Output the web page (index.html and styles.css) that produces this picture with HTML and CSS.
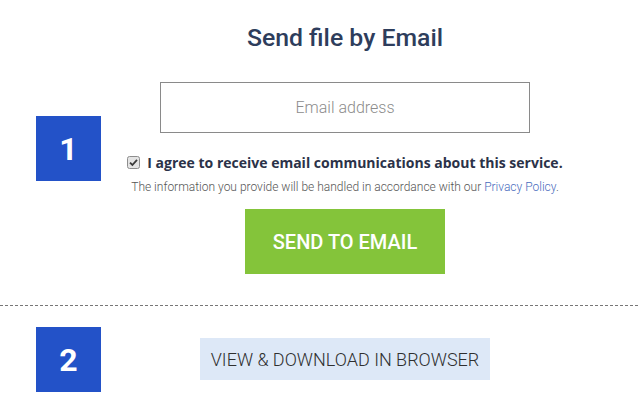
FILE: index.html
```html
<!DOCTYPE html>
<html>
<head>
<meta charset="utf-8">
<link rel="stylesheet" href="styles.css">
</head>
<body>
<section class="step step-one">
  <div class="num">1</div>
  <div class="content">
    <h1 class="title">Send file by Email</h1>
    <input class="email" type="text" placeholder="Email address">
    <label class="agree">
      <svg class="check" width="13" height="13" viewBox="0 0 13 13" aria-hidden="true">
        <rect x="0.5" y="0.5" width="12" height="12" rx="2" fill="#e4e4e4" stroke="#8d8d8d"/>
        <path d="M3 6.6 L5.4 9 L10 3.8" fill="none" stroke="#3a3a3a" stroke-width="1.8"/>
      </svg>
      <span>I agree to receive email communications about this service.</span>
    </label>
    <p class="note">The information you provide will be handled in accordance with our <a href="#">Privacy Policy</a>.</p>
    <button class="send">SEND TO EMAIL</button>
  </div>
</section>
<hr class="divider">
<section class="step step-two">
  <div class="num">2</div>
  <div class="content">
    <button class="view">VIEW &amp; DOWNLOAD IN BROWSER</button>
  </div>
</section>
</body>
</html>
```
FILE: styles.css
```css
* { box-sizing: border-box; }
html, body { margin: 0; padding: 0; background: #fff; }
body { width: 638px; height: 402px; overflow: hidden; font-family: Roboto, "Liberation Sans", sans-serif; }

.step {
  display: grid;
  grid-template-columns: 65px 488px;
  padding-left: 36px;
  align-items: start;
}
.num {
  width: 65px;
  height: 65px;
  background: #2352c8;
  color: #fff;
  font-family: Roboto, sans-serif;
  font-weight: 700;
  font-size: 32px;
  display: flex;
  align-items: center;
  justify-content: center;
}
.content {
  display: flex;
  flex-direction: column;
  align-items: center;
}
.step-one { height: 305px; }
.step-one .num { margin-top: 116px; }
.step-one .content { padding-top: 24px; }
.title {
  margin: 0;
  font-size: 24.8px;
  font-weight: 500;
  color: #2e3d5c;
  line-height: 28px;
}
.email {
  margin-top: 30px;
  width: 370px;
  height: 51px;
  border: 1px solid #8a8a8a;
  font-family: Roboto, sans-serif;
  font-weight: 300;
  font-size: 16px;
  text-align: center;
  color: #333;
  outline: none;
}
.email::placeholder { color: #8c8c8c; }
.agree {
  margin-top: 20px;
  display: flex;
  align-items: center;
  font-family: "Open Sans", sans-serif;
  font-weight: 700;
  font-size: 14px;
  line-height: 19px;
  color: #2b3248;
  white-space: nowrap;
  gap: 7px;
}
.check { display: block; flex: none; }
.note {
  margin: 8px 0 0;
  font-size: 12px;
  line-height: 14px;
  font-weight: 300;
  color: #555;
  white-space: nowrap;
}
.note a { color: #4a6cbd; text-decoration: none; }
.send {
  margin-top: 15px;
  width: 200px;
  height: 65px;
  border: 0;
  background: #84c43a;
  color: #fff;
  font-family: Roboto, sans-serif;
  font-weight: 500;
  font-size: 20px;
}
.divider {
  margin: 0;
  border: 0;
  border-top: 1px dashed #777;
  height: 0;
}
.step-two { padding-top: 21px; }
.step-two .content { padding-top: 11px; }
.view {
  width: 290px;
  height: 42px;
  border: 0;
  background: #dde8f7;
  color: #2f2f2f;
  font-family: Roboto, sans-serif;
  font-weight: 300;
  font-size: 18px;
}
```
